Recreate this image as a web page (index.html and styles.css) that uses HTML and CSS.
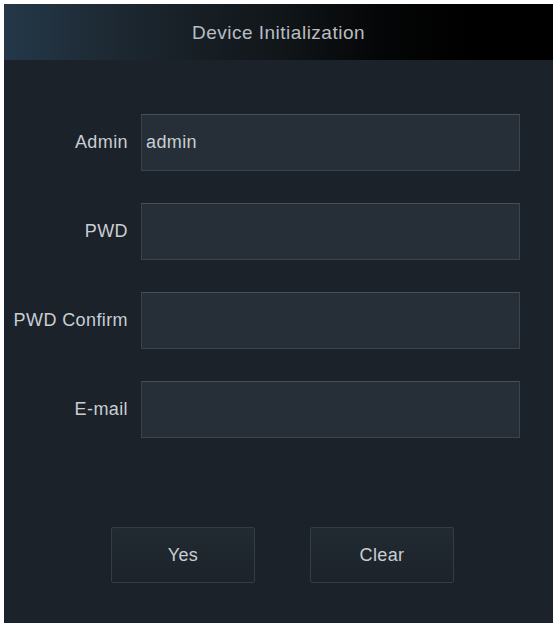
FILE: index.html
```html
<!DOCTYPE html>
<html lang="en">
<head>
    <meta charset="UTF-8">
    <meta name="viewport" content="width=device-width, initial-scale=1.0">
    <title>Device Initialization</title>
    <link rel="stylesheet" href="styles.css">
</head>
<body>
    <div class="panel">
        <div class="header">Device Initialization</div>

        <div class="form">
            <div class="row">
                <label for="admin">Admin</label>
                <input id="admin" type="text" value="admin">
            </div>
            <div class="row">
                <label for="pwd">PWD</label>
                <input id="pwd" type="password">
            </div>
            <div class="row">
                <label for="pwdConfirm">PWD Confirm</label>
                <input id="pwdConfirm" type="password">
            </div>
            <div class="row">
                <label for="email">E-mail</label>
                <input id="email" type="text">
            </div>
        </div>

        <div class="buttons">
            <button>Yes</button>
            <button>Clear</button>
        </div>
    </div>
</body>
</html>
```

FILE: styles.css
```css
body {
    margin: 0;
    padding: 0;
    background: white;
    font-family: "Liberation Sans", Arial, sans-serif;
}
.panel {
    margin: 4px 4px 3px 4px;
    height: 619px;
    background: #1b222a;
    display: flex;
    flex-direction: column;
}
.header {
    height: 56px;
    padding-top: 2px;
    box-sizing: border-box;
    display: flex;
    align-items: center;
    justify-content: center;
    font-size: 19px;
    letter-spacing: 0.5px;
    color: #b9bec3;
    background: linear-gradient(90deg, #243849 0%, #1c2730 22%, #111619 50%, #050607 68%, #000000 85%);
}
.form {
    display: flex;
    flex-direction: column;
    gap: 32px;
    margin-top: 54px;
}
.row {
    display: flex;
    align-items: center;
    gap: 13px;
}
.row label {
    width: 124px;
    text-align: right;
    font-size: 18px;
    letter-spacing: 0.4px;
    color: #c9ced3;
}
.row input {
    width: 379px;
    height: 57px;
    box-sizing: border-box;
    background: #262e37;
    border: 1px solid #3a444d;
    border-top-color: #46505a;
    padding: 0 4px;
    font-family: inherit;
    font-size: 18px;
    letter-spacing: 0.4px;
    color: #c9ced3;
    outline: none;
}
.buttons {
    display: flex;
    gap: 55px;
    margin-top: 89px;
    padding-left: 107px;
}
.buttons button {
    width: 144px;
    height: 56px;
    background: linear-gradient(#222a32, #1c232a);
    border: 1px solid #333d46;
    border-radius: 2px;
    font-family: inherit;
    font-size: 18px;
    letter-spacing: 0.4px;
    color: #c9ced3;
    cursor: pointer;
}
```
